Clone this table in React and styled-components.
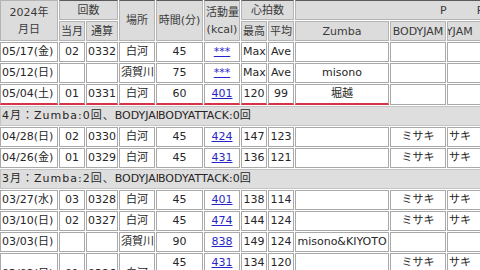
import React from 'react'
import styled, { createGlobalStyle } from 'styled-components'

const Global = createGlobalStyle`
  html, body {
    margin: 0;
    padding: 0;
    overflow: hidden;
    background: #fff;
  }
  body {
    font-family: "DejaVu Sans", "Noto Sans CJK JP", sans-serif;
    font-size: 11px;
    color: #262626;
  }
`

const Table = styled.table`
  border-collapse: separate;
  border-spacing: 1px;
  table-layout: fixed;
  width: 523px;
  margin: -1px 0 0 -1px;
`

const Head = styled.th`
  box-sizing: border-box;
  background: #dcdcdc;
  border: 1px solid #b4b4b4;
  border-top-color: ${p => (p.$dark ? '#5a5a5a' : '#b4b4b4')};
  font-weight: normal;
  color: #3a3a3a;
  line-height: 17px;
  height: 20px;
  padding: 0 1px;
  text-align: ${p => p.$align || 'center'};
  white-space: nowrap;
  overflow: hidden;
`

const Cell = styled.td`
  box-sizing: border-box;
  border: 1px solid #a9a9a9;
  border-bottom: ${p => (p.$red ? '2px solid #d8314a' : '1px solid #a9a9a9')};
  height: 20px;
  line-height: 18px;
  padding: 0 1px;
  text-align: ${p => p.$align || 'center'};
  white-space: nowrap;
  overflow: hidden;
`

const Summary = styled.td`
  box-sizing: border-box;
  background: #dedede;
  border: 1px solid #c4c4c4;
  height: 20px;
  line-height: 18px;
  padding: 0 1px;
  white-space: nowrap;
  overflow: hidden;
`

const Clip = styled.span`
  display: inline-block;
  vertical-align: top;
  width: ${p => p.$w}px;
  overflow: hidden;
  white-space: nowrap;
`

const Month = styled.span`
  letter-spacing: 1px;
`

const Shift = styled.span`
  display: inline-block;
  margin-left: ${p => p.$x}px;
`

const Kcal = styled.a`
  color: #2626c8;
  text-decoration: underline;
`

const widths = [58, 26, 32, 36, 47, 36, 26, 26, 94, 56, 74]

const rows = [
  { date: '05/17(金)', m: '02', t: '0332', place: '白河', time: '45', kcal: '***', max: 'Max', ave: 'Ave' },
  { date: '05/12(日)', m: '', t: '', place: '須賀川', time: '75', kcal: '***', max: 'Max', ave: 'Ave', zumba: 'misono' },
  { date: '05/04(土)', m: '01', t: '0331', place: '白河', time: '60', kcal: '401', max: '120', ave: '99', zumba: '堀越', red: true },
  { sum: '4月：Zumba:0回、', jam: 'BODYJAM:0回、', rest: 'BODYATTACK:0回' },
  { date: '04/28(日)', m: '02', t: '0330', place: '白河', time: '45', kcal: '424', max: '147', ave: '123', jam: 'ミサキ', jam2: 'サキ' },
  { date: '04/26(金)', m: '01', t: '0329', place: '白河', time: '45', kcal: '431', max: '136', ave: '121', jam: 'ミサキ', jam2: 'サキ' },
  { sum: '3月：Zumba:2回、', jam: 'BODYJAM:0回、', rest: 'BODYATTACK:0回' },
  { date: '03/27(水)', m: '03', t: '0328', place: '白河', time: '45', kcal: '401', max: '138', ave: '114', jam: 'ミサキ', jam2: 'サキ' },
  { date: '03/10(日)', m: '02', t: '0327', place: '白河', time: '45', kcal: '474', max: '144', ave: '124', jam: 'ミサキ', jam2: 'サキ' },
  { date: '03/03(日)', m: '', t: '', place: '須賀川', time: '90', kcal: '838', max: '149', ave: '124', zumba: 'misono&KIYOTO' },
]

// time .. instructor columns, shared by normal rows and the split last row
const Tail = (p) => (
  <>
    <Cell $red={p.red}>{p.time}</Cell>
    <Cell $red={p.red}><Kcal href="#">{p.kcal}</Kcal></Cell>
    <Cell $red={p.red}>{p.max}</Cell>
    <Cell $red={p.red}>{p.ave}</Cell>
    <Cell $red={p.red}>{p.zumba}</Cell>
    <Cell>{p.jam}</Cell>
    <Cell $align="left">{p.jam2}</Cell>
  </>
)

const Row = ({ r }) => {
  if (r.sum) {
    return (
      <tr>
        <Summary colSpan={11}>
          <Clip $w={156}>
            <Month>{r.sum}</Month>
            {r.jam}
          </Clip>
          {r.rest}
        </Summary>
      </tr>
    )
  }
  return (
    <tr>
      <Cell $align="left" $red={r.red}>{r.date}</Cell>
      <Cell $red={r.red}>{r.m}</Cell>
      <Cell $red={r.red}>{r.t}</Cell>
      <Cell $red={r.red}>{r.place}</Cell>
      <Tail {...r} />
    </tr>
  )
}

export default function App() {
  return (
    <>
      <Global />
      <Table>
        <colgroup>
          {widths.map((w, i) => (
            <col key={i} style={{ width: w }} />
          ))}
        </colgroup>
        <thead>
          <tr>
            <Head rowSpan={2}>2024年<br />月日</Head>
            <Head colSpan={2} $dark>回数</Head>
            <Head rowSpan={2} $dark>場所</Head>
            <Head rowSpan={2} $dark>時間(分)</Head>
            <Head rowSpan={2} $dark>活動量<br />(kcal)</Head>
            <Head colSpan={2} $dark>心拍数</Head>
            <Head colSpan={3} $dark $align="left">
              <Shift $x={143}>P</Shift>
              <Shift $x={30}>P</Shift>
            </Head>
          </tr>
          <tr>
            <Head>当月</Head>
            <Head>通算</Head>
            <Head>最高</Head>
            <Head>平均</Head>
            <Head>Zumba</Head>
            <Head>BODYJAM</Head>
            <Head $align="left">
              <Shift $x={-27}>BODYJAM</Shift>
            </Head>
          </tr>
        </thead>
        <tbody>
          {rows.map((r, i) => (
            <Row key={i} r={r} />
          ))}
          <tr>
            <Cell $align="left" rowSpan={2}>03/02(日)</Cell>
            <Cell rowSpan={2}>01</Cell>
            <Cell rowSpan={2}>0326</Cell>
            <Cell rowSpan={2}>白河</Cell>
            <Tail time="45" kcal="431" max="134" ave="120" jam="ミサキ" jam2="サキ" />
          </tr>
          <tr>
            <Tail time="45" kcal="412" max="131" ave="118" jam="ミサキ" jam2="サキ" />
          </tr>
        </tbody>
      </Table>
    </>
  )
}
